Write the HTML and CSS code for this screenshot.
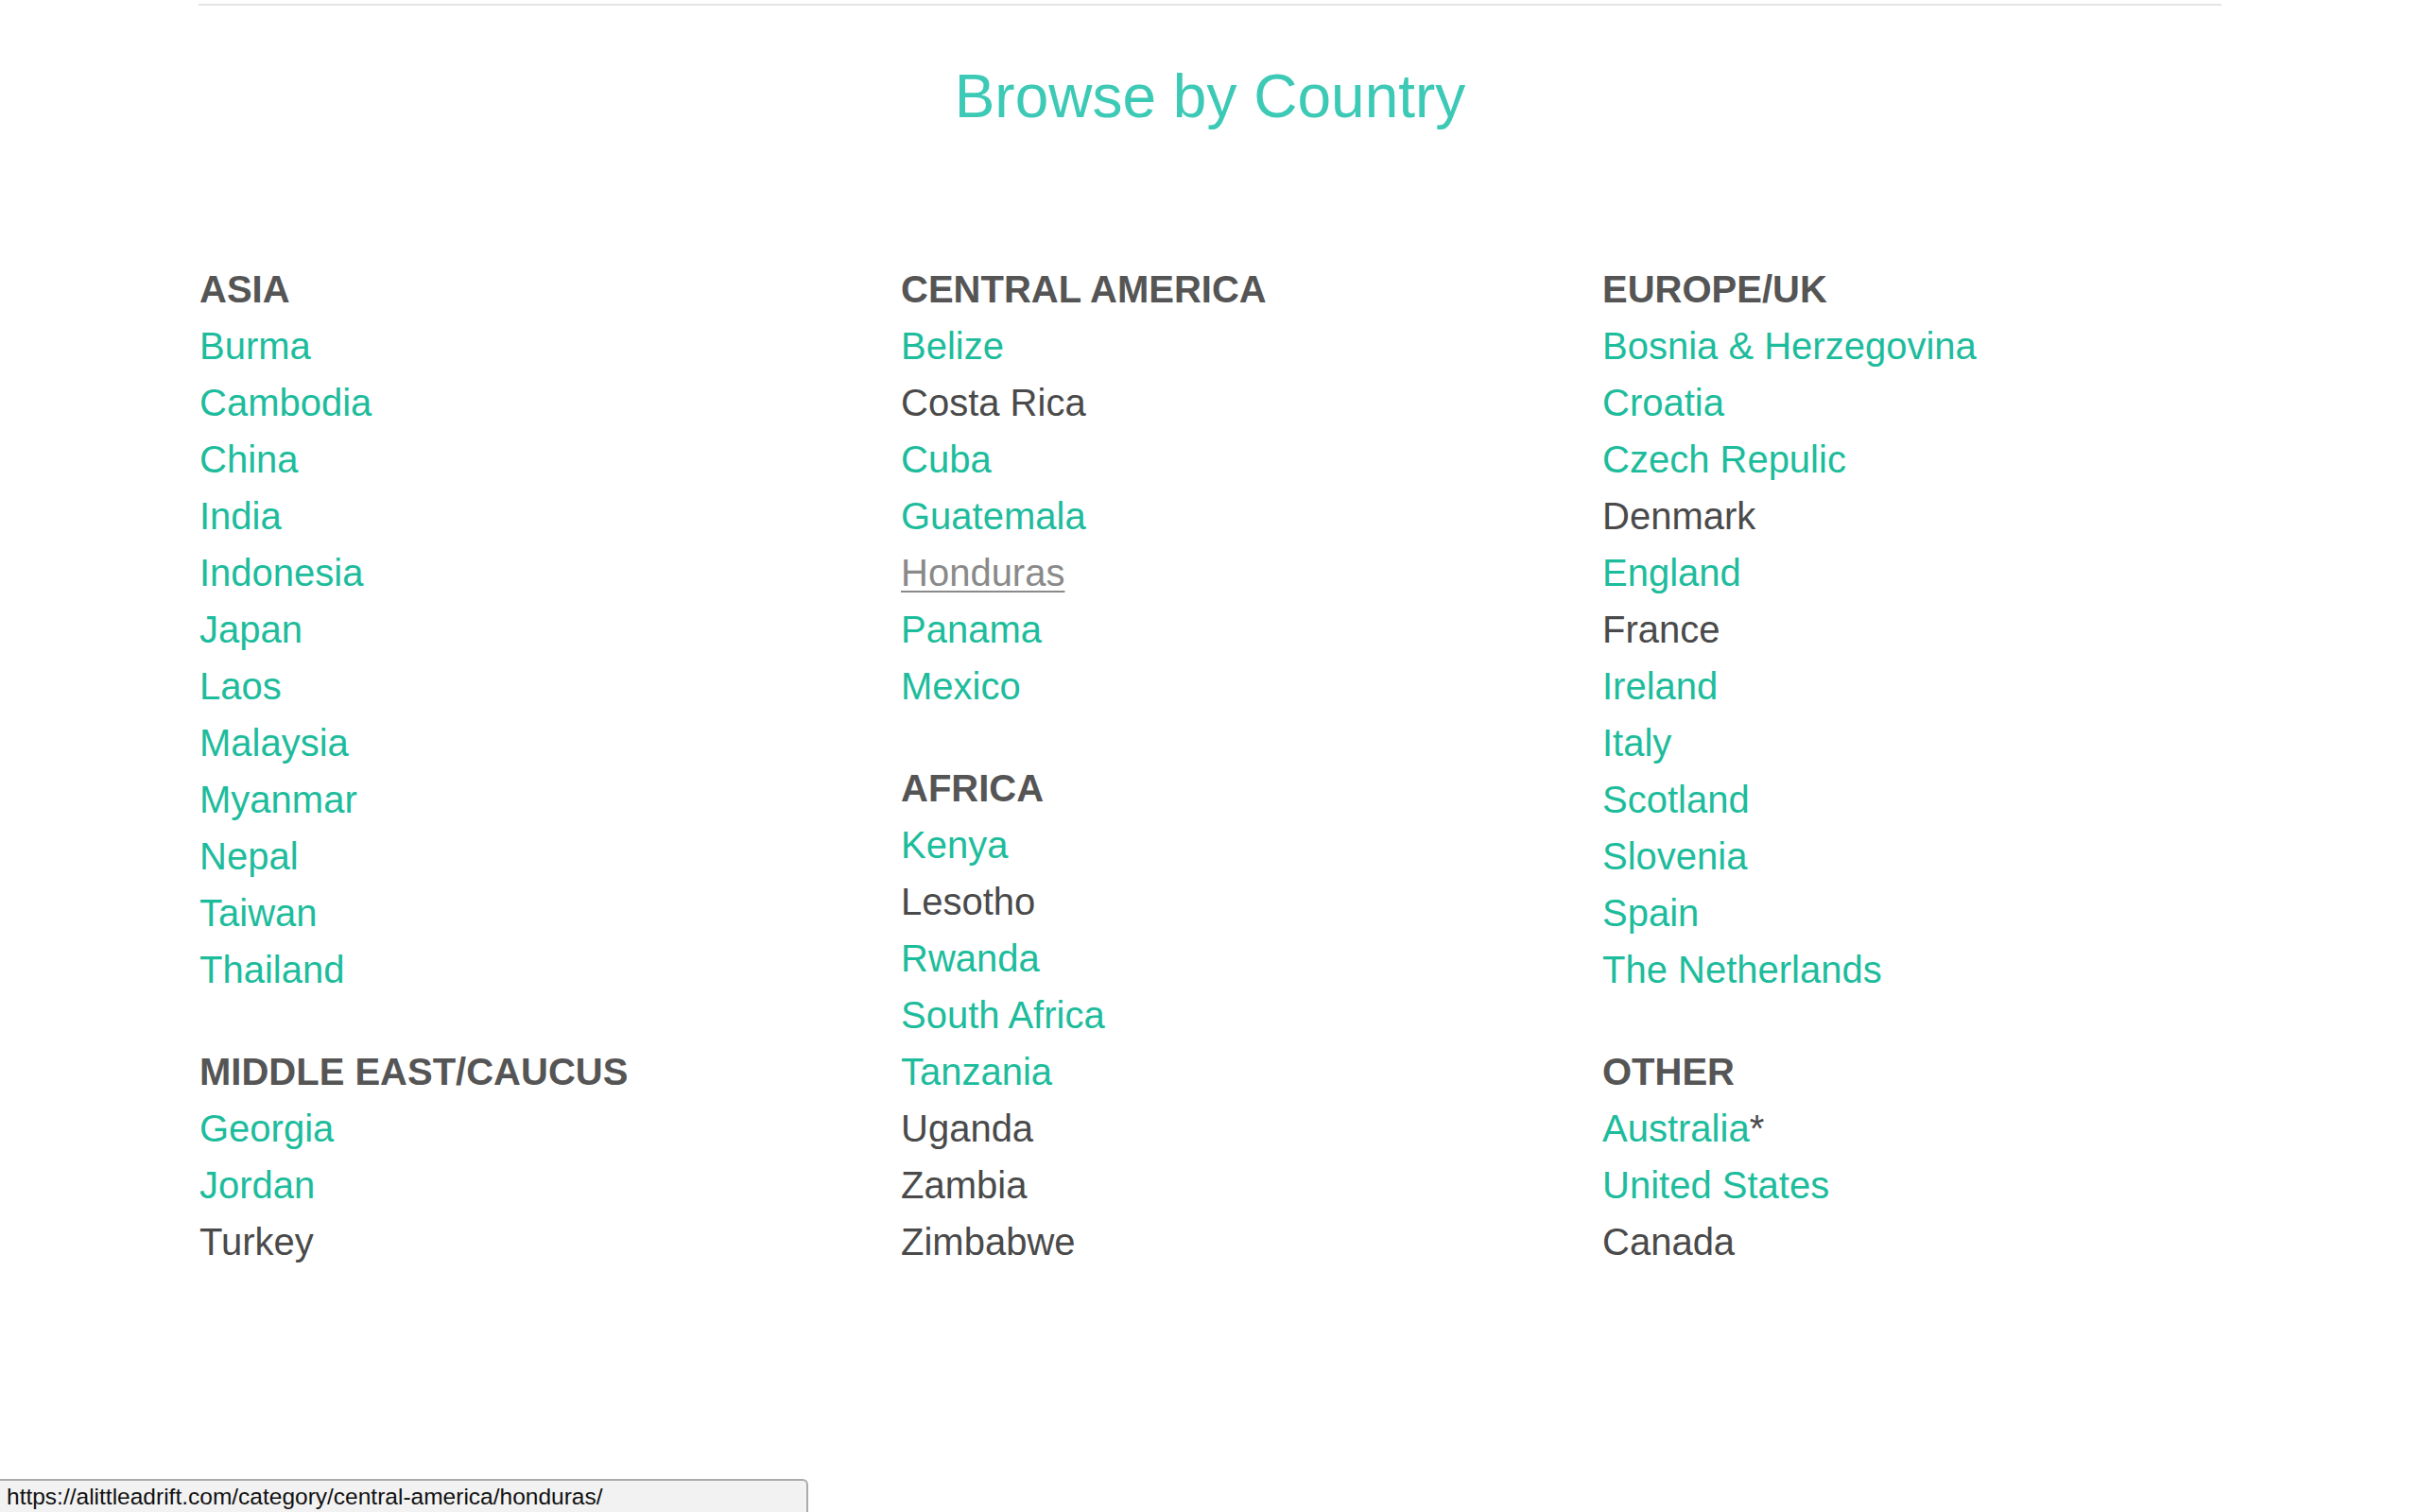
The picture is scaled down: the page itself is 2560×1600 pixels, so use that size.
FILE: index.html
```html
<!DOCTYPE html>
<html lang="en">
<head>
<meta charset="utf-8">
<title>Browse by Country</title>
<link rel="stylesheet" href="styles.css">
</head>
<body>
<div class="page">
  <hr class="rule">
  <h1 class="title">Browse by Country</h1>
  <div class="grid">
    <div class="col">
      <section class="region">
        <h2 class="region-name">ASIA</h2>
        <ul class="list">
          <li><a class="link" href="#">Burma</a></li>
          <li><a class="link" href="#">Cambodia</a></li>
          <li><a class="link" href="#">China</a></li>
          <li><a class="link" href="#">India</a></li>
          <li><a class="link" href="#">Indonesia</a></li>
          <li><a class="link" href="#">Japan</a></li>
          <li><a class="link" href="#">Laos</a></li>
          <li><a class="link" href="#">Malaysia</a></li>
          <li><a class="link" href="#">Myanmar</a></li>
          <li><a class="link" href="#">Nepal</a></li>
          <li><a class="link" href="#">Taiwan</a></li>
          <li><a class="link" href="#">Thailand</a></li>
        </ul>
      </section>
      <section class="region">
        <h2 class="region-name">MIDDLE EAST/CAUCUS</h2>
        <ul class="list">
          <li><a class="link" href="#">Georgia</a></li>
          <li><a class="link" href="#">Jordan</a></li>
          <li>Turkey</li>
        </ul>
      </section>
    </div>
    <div class="col">
      <section class="region">
        <h2 class="region-name">CENTRAL AMERICA</h2>
        <ul class="list">
          <li><a class="link" href="#">Belize</a></li>
          <li>Costa Rica</li>
          <li><a class="link" href="#">Cuba</a></li>
          <li><a class="link" href="#">Guatemala</a></li>
          <li><a class="link hover" href="#">Honduras</a></li>
          <li><a class="link" href="#">Panama</a></li>
          <li><a class="link" href="#">Mexico</a></li>
        </ul>
      </section>
      <section class="region">
        <h2 class="region-name">AFRICA</h2>
        <ul class="list">
          <li><a class="link" href="#">Kenya</a></li>
          <li>Lesotho</li>
          <li><a class="link" href="#">Rwanda</a></li>
          <li><a class="link" href="#">South Africa</a></li>
          <li><a class="link" href="#">Tanzania</a></li>
          <li>Uganda</li>
          <li>Zambia</li>
          <li>Zimbabwe</li>
        </ul>
      </section>
    </div>
    <div class="col">
      <section class="region">
        <h2 class="region-name">EUROPE/UK</h2>
        <ul class="list">
          <li><a class="link" href="#">Bosnia &amp; Herzegovina</a></li>
          <li><a class="link" href="#">Croatia</a></li>
          <li><a class="link" href="#">Czech Repulic</a></li>
          <li>Denmark</li>
          <li><a class="link" href="#">England</a></li>
          <li>France</li>
          <li><a class="link" href="#">Ireland</a></li>
          <li><a class="link" href="#">Italy</a></li>
          <li><a class="link" href="#">Scotland</a></li>
          <li><a class="link" href="#">Slovenia</a></li>
          <li><a class="link" href="#">Spain</a></li>
          <li><a class="link" href="#">The Netherlands</a></li>
        </ul>
      </section>
      <section class="region">
        <h2 class="region-name">OTHER</h2>
        <ul class="list">
          <li><a class="link" href="#">Australia</a>*</li>
          <li><a class="link" href="#">United States</a></li>
          <li>Canada</li>
        </ul>
      </section>
    </div>
  </div>
</div>
<div class="status">https://alittleadrift.com/category/central-america/honduras/</div>
</body>
</html>
```

FILE: styles.css
```css
html, body {
  margin: 0;
  padding: 0;
  background: #ffffff;
}

body {
  font-family: "Liberation Sans", Arial, Helvetica, sans-serif;
  color: #4a4a4a;
}

.page {
  width: 2140px;
  margin: 0 auto;
}

.rule {
  margin: 4px 0 0;
  height: 2px;
  border: 0;
  background: #e4e4e4;
}

.title {
  margin: 58px 0 0;
  font-size: 64px;
  line-height: 77px;
  font-weight: normal;
  text-align: center;
  color: #3cc9b5;
}

.grid {
  display: grid;
  grid-template-columns: repeat(3, 656px);
  column-gap: 86px;
  margin-top: 135px;
  padding-left: 1px;
}

.region + .region {
  margin-top: 48px;
}

.region-name {
  margin: 0;
  font-size: 40px;
  line-height: 60px;
  font-weight: bold;
  color: #555555;
}

.list {
  list-style: none;
  margin: 0;
  padding: 0;
  font-size: 40px;
  line-height: 60px;
  color: #4a4a4a;
}

.link {
  color: #1dbc9c;
  text-decoration: none;
}

.link.hover {
  color: #8a8a8a;
  text-decoration: underline;
  text-decoration-thickness: 2px;
  text-underline-offset: 5px;
}

.status {
  position: fixed;
  left: 0;
  bottom: 0;
  width: 846px;
  height: 33px;
  box-sizing: content-box;
  padding: 0 0 0 7px;
  background: #f2f2f2;
  border: 2px solid #ababab;
  border-left: 0;
  border-bottom: 0;
  border-top-right-radius: 6px;
  font-family: "Liberation Sans", Arial, Helvetica, sans-serif;
  font-size: 24.5px;
  line-height: 33px;
  color: #111111;
  white-space: nowrap;
}
```
